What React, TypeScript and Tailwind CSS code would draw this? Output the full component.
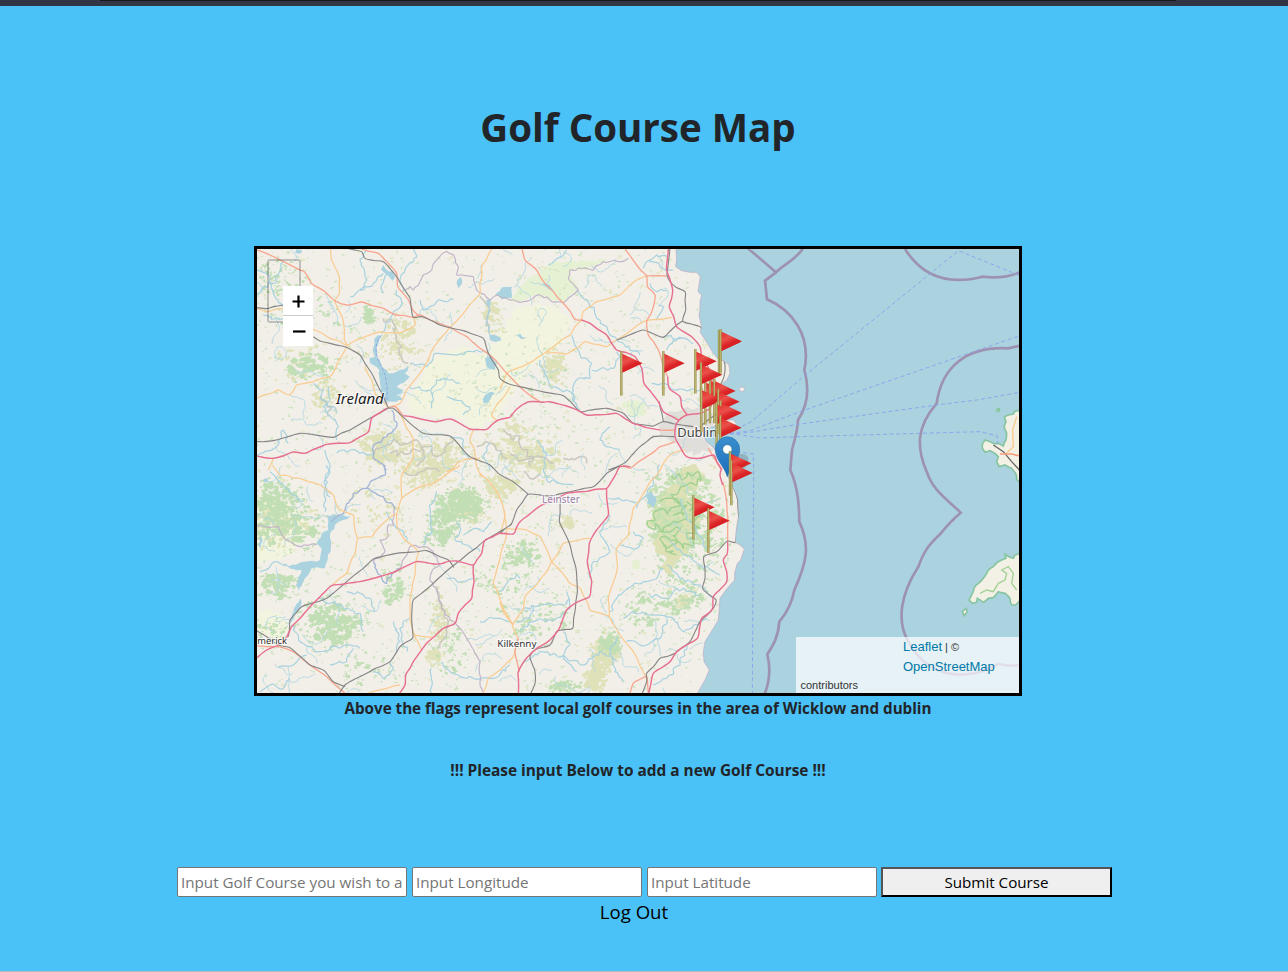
import React from "react";

type Pt = [number, number];

/* The chart is drawn on a grid of three units per pixel, split in six sheets. */
const SHEETS: Pt[] = [
  [0, 0],
  [750, 0],
  [1500, 0],
  [0, 675],
  [750, 675],
  [1500, 675],
];

function makeRandom(seed: number) {
  let s = seed;
  return () => {
    s = (s * 1664525 + 1013904223) % 4294967296;
    return s / 4294967296;
  };
}

function pts(sheet: number, text: string): Pt[] {
  const [ox, oy] = SHEETS[sheet];
  return text.split(" ").map((p) => {
    const [x, y] = p.split(",").map(Number);
    return [x + ox, y + oy] as Pt;
  });
}

function jitter(list: Pt[], amount: number, step: number, rnd: () => number): Pt[] {
  const out: Pt[] = [list[0]];
  for (let i = 1; i < list.length; i++) {
    const [ax, ay] = list[i - 1];
    const [bx, by] = list[i];
    const n = Math.max(1, Math.round(Math.hypot(bx - ax, by - ay) / step));
    for (let k = 1; k <= n; k++) {
      const t = k / n;
      const j = k === n ? 0 : amount;
      out.push([ax + (bx - ax) * t + (rnd() - 0.5) * j, ay + (by - ay) * t + (rnd() - 0.5) * j]);
    }
  }
  return out;
}

function smooth(p: Pt[]): string {
  let d = `M${p[0][0].toFixed(1)},${p[0][1].toFixed(1)}`;
  for (let i = 0; i < p.length - 1; i++) {
    const a = p[i - 1] || p[i];
    const b = p[i];
    const c = p[i + 1];
    const e = p[i + 2] || c;
    d += `C${(b[0] + (c[0] - a[0]) / 7).toFixed(1)},${(b[1] + (c[1] - a[1]) / 7).toFixed(1)} ${(c[0] - (e[0] - b[0]) / 7).toFixed(1)},${(c[1] - (e[1] - b[1]) / 7).toFixed(1)} ${c[0].toFixed(1)},${c[1].toFixed(1)}`;
  }
  return d;
}

const rnd = makeRandom(77);

function lines(source: [number, string][], amount: number, step: number): string {
  return source.map(([s, t]) => smooth(jitter(pts(s, t), amount, step, rnd))).join("");
}

function areas(source: [number, string][], amount: number): string {
  return source
    .map(([s, t]) => {
      const p = pts(s, t);
      return (
        "M" +
        jitter([...p, p[0]], amount, 12, rnd)
          .map(([x, y]) => `${x.toFixed(0)},${y.toFixed(0)}`)
          .join("L") +
        "Z"
      );
    })
    .join("");
}

const COAST: Pt[] = [
  ...pts(1, "528,20 530,60 527,80 545,92 570,97 590,97 601,110 598,130 594,155 605,165 600,185 600,210 597,225 605,262 600,275 622,310 640,340 655,358 670,362 687,375 690,400 680,420 668,430 664,470 668,510 676,540 700,540 710,552 690,562 650,556 622,565 610,582 618,605 640,622 655,645 672,672"),
  ...pts(4, "682,30 700,70 713,100 716,150 708,200 706,232 720,240 733,252 722,285 712,295 704,325 704,345 680,372 660,400 658,430 655,465 640,490 615,530 610,560 612,590 628,615 615,645 595,680 585,700"),
];
const LAND = "M0,0L" + COAST.map((p) => p.join(",")).join("L") + "L0,1400Z";

const WALES = areas(
  [
    [2, "815,512 795,513 790,522 775,525 763,530 768,545 762,560 770,580 768,600 760,618 745,610 735,612 720,605 705,600 697,612 697,625 705,637 720,632 735,640 745,650 740,665 748,680 765,675 785,685 797,700 800,718 815,728"],
    [5, "815,262 795,270 790,280 765,268 768,280 745,290 730,305 715,315 700,340 685,355 672,370 665,390 657,405 668,415 680,412 682,400 700,412 715,400 730,398 745,380 765,385 780,400 785,420 797,420 815,400"],
    [5, "637,440 648,430 652,440 642,452"],
    [2, "741,508 748,506 748,513 741,514"],
  ],
  4,
);
const ISLAND = areas([[1, "716,446 726,440 735,446 728,456 720,452"]], 2);

const MOTORWAYS = lines(
  [
    [0, "21,648 70,655 130,636 165,640 230,613 300,608 355,575 365,535 410,505"],
    [0, "460,527 560,545 600,537 660,567 710,568 745,540 780,532"],
    [1, "30,532 50,508 80,487 150,485 220,505 260,525 350,520 400,550 440,563 480,570"],
    [1, "245,240 270,250 320,285 350,330 405,350 425,385 432,430 475,485 490,515 535,540"],
    [1, "503,410 508,445 540,470 545,500 562,525"],
    [1, "505,20 500,90 518,150 508,200 530,260 575,290 600,320 605,350 635,400 640,450 630,505 600,520 560,525 530,550 525,590 540,620 560,650 600,655 640,645 665,690"],
    [3, "21,578 50,555 85,540 108,520 125,485 190,415 220,385 245,362 330,350 440,318 500,290 550,297 620,288 670,300 695,265 703,228 750,205 790,207 810,170 860,130 950,85 1070,70 1110,5 1140,5"],
    [3, "670,300 672,350 665,400 625,445 615,475 580,490 530,535 490,590 467,630 465,660 445,690"],
    [4, "320,70 325,150 290,195 268,235 262,290 275,350 268,395 230,412 200,435 175,495 150,525 110,550 75,585 55,620 55,690"],
    [4, "665,10 660,30 668,60"],
    [4, "683,230 682,265 670,285 680,320 680,350 640,395 638,430 605,460 592,520 560,540 530,560 510,590 460,625 445,690"],
  ],
  4,
  28,
);

const TRUNKS = lines(
  [
    [0, "21,30 60,45 90,60 150,90 165,97 185,130 225,155 255,183 290,195 335,186 400,205 440,225 490,232 510,225 540,240 600,262 650,290 690,325 720,345 745,370 780,410 820,450 870,485"],
    [0, "335,27 385,40 405,60 440,100 443,140 475,180 490,212 510,230"],
    [0, "410,505 435,500 460,527"],
    [1, "65,20 75,60 110,90 135,130 160,155 190,190 225,238 245,240"],
    [1, "370,20 410,75 440,108 443,140 465,165 460,200 440,245 445,285 475,330 490,380 503,410"],
    [1, "440,108 500,108"],
    [1, "480,570 525,570"],
    [1, "525,605 480,620 440,650 390,685 370,675"],
    [1, "625,625 640,650 665,685"],
    [3, "21,542 85,545 130,560 180,600 230,635 285,685"],
    [4, "668,50 680,110 683,190 683,230"],
    [4, "55,520 45,560 58,620"],
    [4, "390,684 400,655 440,635 445,684"],
  ],
  4,
  28,
);

const PRIMARIES = lines(
  [
    [0, "242,20 245,60 268,110 268,160 255,183 278,235 283,300 290,315 280,340 240,410 140,435 118,465 85,450 21,475"],
    [0, "150,255 190,268 240,295 290,315 340,292 390,276 450,278 495,255 490,232"],
    [0, "730,20 695,80 690,160 640,220 600,262 560,310 520,385 470,450 450,490 425,500"],
    [0, "440,500 460,540 490,600 490,650 455,705 455,775"],
    [0, "345,380 365,420 380,470 415,500"],
    [0, "780,440 740,495 725,525 740,540"],
    [0, "670,570 660,600 672,625 680,680 695,710"],
    [0, "590,695 640,660 690,655"],
    [0, "55,690 68,660 60,655"],
    [0, "21,205 50,215 100,205"],
    [1, "245,240 210,285 160,320 140,335 95,365 20,400 0,450"],
    [1, "140,335 200,342 255,305 320,320 350,300 430,245 515,232"],
    [1, "245,240 250,215 290,185 360,165 410,120 440,108"],
    [1, "555,630 510,645 480,690 440,745 400,805 385,885 350,925 352,985 325,1075 328,1130"],
    [3, "67,0 90,30 150,40 210,60 250,90 265,130 310,150 322,220 315,265 290,325 245,362"],
    [3, "322,220 365,215 405,170 440,145 455,100 500,70 560,50 600,20 630,0"],
    [3, "440,145 443,190 465,225 505,260 495,330 480,400 480,460 495,515 515,555"],
    [3, "495,510 550,517"],
    [3, "690,25 730,65 755,110 765,160 770,200 750,280 730,355 760,430 790,480"],
    [3, "355,684 410,670 450,660"],
    [3, "700,684 715,640 750,615 790,575 805,520"],
    [4, "20,190 80,195 120,215 155,290 210,355 240,370 270,435 328,455 360,510 400,560 440,640"],
    [4, "155,290 190,235 225,228 272,220"],
    [4, "155,290 140,320 75,395 70,430 38,480 55,520"],
    [4, "0,410 10,440 38,480"],
    [4, "0,100 15,150 5,210"],
  ],
  5,
  24,
);

const RAILS = lines(
  [
    [0, "290,25 335,35 345,55 400,65 440,110 480,175 490,232 515,230 570,255 640,272 700,295 715,340 745,390 750,415 780,433 820,442 940,467 990,515 1070,505 1120,520 1150,550 1210,558 1240,545 1330,560"],
    [0, "190,290 210,303 285,320 330,345 365,400 385,440 415,503 430,505 480,550 520,580 600,588 660,650 720,675 745,700 790,725 835,763"],
    [0, "21,605 70,602 150,580 250,592 300,570 360,535 415,505"],
    [0, "21,203 50,206 100,195"],
    [1, "510,20 508,45 502,110 525,140 555,155 557,210 548,243 600,260 625,305 660,345 674,370 672,410 655,450 650,520 600,560"],
    [1, "548,243 530,255 490,292 430,270 350,300"],
    [1, "490,545 480,500 478,485"],
    [1, "325,690 375,668 420,620 460,590 525,590"],
    [3, "115,515 120,465 155,425 230,400 290,350 340,310 375,280 440,265 530,257 570,275 595,285 612,307"],
    [3, "785,178 700,230 612,300 560,345 490,405 485,460 488,520 450,545 420,590 350,625 285,660 265,690"],
    [3, "21,498 50,515 85,540 120,548 180,600 220,615 250,650 285,665"],
    [4, "0,205 35,175 50,135 85,88 150,93 220,78 280,65 320,25 360,2"],
    [4, "182,95 178,170 210,240 228,310 232,380 218,490 170,500 150,540 110,552 90,575 105,620 105,655 90,690"],
    [4, "690,40 712,100 716,160 706,232 683,228 650,260 612,275 615,340 608,370 648,405 640,430 600,470 570,530 525,565 480,580 440,625 440,650 425,690"],
    [1, "612,590 640,620 660,650 690,690"],
  ],
  3,
  30,
);

const LAKES = areas(
  [
    [0, "372,300 385,285 395,290 385,310 380,350 400,385 415,400 440,395 475,378 465,400 480,410 440,440 460,450 440,465 460,480 425,485 400,490 390,430 388,390 360,370 358,355 375,350 368,330"],
    [0, "393,88 400,75 418,95 430,92 436,110 428,122 415,108"],
    [0, "735,165 760,145 785,140 785,175 755,178"],
    [0, "718,285 735,285 755,300 740,305 720,300"],
    [0, "705,355 725,350 742,370 735,390 710,380"],
    [0, "705,465 725,455 735,460 720,480 700,490"],
    [0, "135,38 140,28 155,30 155,38"],
    [0, "622,120 632,110 636,130 625,145"],
    [0, "710,180 722,178 722,195 710,195"],
    [1, "0,150 20,140 32,145 25,165 0,175"],
    [1, "120,136 135,132 148,134 162,152 150,150 140,142"],
    [1, "48,285 62,283 80,293 65,298"],
    [3, "230,150 300,153 255,180 240,210 242,260 225,310 185,310 165,340 145,380 138,360 155,315 115,305 160,290 210,285 215,250 200,235 215,205 235,195"],
    [3, "40,42 52,40 55,52 42,52"],
    [3, "28,215 35,218 33,248 26,245"],
    [3, "150,400 155,410 125,470 112,480 130,440"],
    [4, "445,85 455,78 470,105 460,130 440,115"],
  ],
  8,
);

const RIVERS = lines(
  [
    [0, "440,150 455,190 430,220 395,280"],
    [0, "350,30 330,60 350,120 340,150 300,170"],
    [0, "400,100 370,130 330,150"],
    [0, "410,100 395,135 400,160"],
    [0, "21,90 60,110 70,160 120,230 90,240 40,225"],
    [0, "100,65 70,130 40,140 21,170"],
    [0, "460,155 450,120 470,80 500,50 490,27"],
    [0, "510,180 520,210 560,185 610,180"],
    [0, "235,440 240,480 220,500 265,560 260,600"],
    [0, "190,430 220,450 215,480 250,500 260,520"],
    [0, "480,440 540,450 550,480 545,505"],
    [0, "480,370 530,380 560,340 620,345 670,335 700,330"],
    [0, "545,450 560,420 600,420 630,430"],
    [0, "590,470 640,490 660,510 640,525"],
    [0, "715,190 710,240 720,285"],
    [0, "21,650 80,620 100,570 115,610"],
    [0, "225,630 240,680 225,740 240,770"],
    [0, "260,640 300,630 330,640 370,640"],
    [0, "600,590 640,600 640,640 660,660"],
    [0, "720,610 700,650 720,690"],
    [1, "145,75 165,60 185,50 200,30"],
    [1, "230,150 260,180 300,240 340,290 390,330 420,345"],
    [1, "215,285 240,345 275,370 270,415 230,420 215,460 230,500"],
    [1, "120,360 135,400 150,440 210,455 240,510"],
    [1, "275,390 340,385 360,350 350,335"],
    [1, "445,60 480,80 520,90"],
    [1, "500,50 470,45 440,65 430,85"],
    [1, "500,150 470,155 450,130"],
    [1, "490,290 540,295 580,310"],
    [1, "470,240 490,200 475,195"],
    [1, "500,330 520,300 560,295"],
    [1, "455,430 490,430 530,450 600,450"],
    [1, "110,600 140,640 130,690 140,720 220,735"],
    [1, "330,560 300,600 320,620 360,630"],
    [3, "60,20 130,90 160,110"],
    [3, "230,0 240,20 222,50 225,140"],
    [3, "480,235 460,200 430,175 410,140"],
    [3, "30,320 80,290 130,310"],
    [3, "290,380 330,385 365,410 370,440"],
    [3, "205,400 260,420 330,445 340,500"],
    [3, "85,605 130,600 170,570"],
    [3, "125,480 150,530 210,560 290,540 330,550"],
    [3, "240,600 290,590 310,550"],
    [3, "430,470 450,530 440,560"],
    [3, "470,560 450,490 480,460"],
    [3, "370,620 400,640 430,610 420,590"],
    [3, "545,610 545,684"],
    [3, "575,590 600,620 650,640 730,640 780,600"],
    [3, "560,80 540,130 545,200 520,240"],
    [3, "590,340 640,350 670,340"],
    [3, "620,170 630,200 615,220 650,240 690,260"],
    [3, "690,470 730,460 780,470"],
    [3, "725,170 700,200 680,190 640,210"],
    [3, "120,640 100,670 60,660 30,680"],
    [4, "480,0 460,50 430,100 410,130"],
    [4, "325,100 380,105 410,110"],
    [4, "330,150 300,200 330,260 280,290 270,340"],
    [4, "510,230 560,270 600,300 660,330"],
    [4, "500,300 540,340 600,360 640,400"],
    [4, "330,440 350,400 400,360 440,350 470,340 490,310"],
    [4, "370,460 400,440 460,450 520,460 550,500 620,460"],
    [4, "500,460 480,520 440,540 380,530"],
    [4, "200,380 210,430 170,460 100,470 60,500"],
    [4, "75,590 120,560 200,580 250,600 300,560 350,590"],
    [4, "190,500 210,540 190,580 230,620"],
    [4, "350,520 330,560 345,620 370,650"],
    [4, "70,430 120,420 190,420 210,400"],
    [4, "0,380 50,330 60,340"],
    [4, "560,540 540,600 500,640 460,660"],
    [4, "450,390 500,400 530,370 600,390"],
    [4, "620,250 590,200 560,150 540,100"],
    [4, "400,200 430,220 410,250 360,240"],
    [4, "100,420 90,460 50,470"],
  ],
  11,
  11,
);

const SHANNON = lines(
  [
    [0, "425,510 440,560 410,590 370,620 370,650 410,690"],
    [3, "405,0 405,30 370,45 350,70 310,85 280,145 245,170"],
    [3, "350,70 400,95 435,130"],
    [3, "370,290 395,340 410,355 425,325 450,310"],
  ],
  8,
  10,
);

const COUNTIES = lines(
  [
    [0, "465,150 480,140 490,150 510,125 520,105 545,90 560,60 590,35 610,45 625,80 620,105 670,110 680,150 720,180 740,165 780,180 820,185 870,165 900,180 940,188 985,150 955,115 960,90 1000,85 1030,90 1060,65 1105,65 1135,55"],
    [3, "21,183 85,185 100,215 140,242 200,240"],
    [3, "435,130 430,180 415,180 410,220 390,225 405,260 370,290"],
    [3, "450,310 480,245 520,245 550,260 570,300 545,320 540,345 560,370 575,430 620,480 650,520 690,590 690,650 700,684"],
  ],
  8,
  12,
);

const generated = (() => {
  const r = makeRandom(4123);
  let d = "";
  for (let i = 0; i < 140; i++) {
    let x = 30 + r() * 1330;
    let y = 30 + r() * 1330;
    let a = r() * 6.28;
    const list: Pt[] = [[x, y]];
    const n = 5 + Math.floor(r() * 10);
    for (let k = 0; k < n; k++) {
      a += (r() - 0.5) * 1.7;
      x += Math.cos(a) * 9;
      y += Math.sin(a) * 9;
      list.push([x, y]);
    }
    d += smooth(list);
  }
  return d;
})();

function blob(x: number, y: number, radius: number, r: () => number) {
  const n = 7;
  const out: string[] = [];
  for (let i = 0; i < n; i++) {
    const a = (i / n) * 6.283;
    const m = radius * (0.45 + r() * 0.8);
    out.push(`${(x + Math.cos(a) * m).toFixed(0)},${(y + Math.sin(a) * m * 0.8).toFixed(0)}`);
  }
  return "M" + out.join("L") + "Z";
}

/* Every group is centre x, centre y, radius x, radius y, count, size. */
function scatter(groups: number[][], seed: number): string {
  const r = makeRandom(seed);
  let d = "";
  groups.forEach(([cx, cy, rx, ry, count, size]) => {
    for (let i = 0; i < count; i++) {
      const a = r() * 6.283;
      const m = Math.pow(r(), 0.6);
      const x = cx + Math.cos(a) * rx * m;
      const y = cy + Math.sin(a) * ry * m;
      const parts = 1 + Math.floor(r() * 3);
      for (let k = 0; k < parts; k++) {
        d += blob(x + (r() - 0.5) * size * 1.8, y + (r() - 0.5) * size * 1.4, size * (0.35 + r() * 0.5), r);
      }
    }
  });
  return d;
}

/* Small patches thrown wide of each group break up its outline. */
function fringe(groups: number[][]): number[][] {
  return groups.map(([cx, cy, rx, ry, count, size]) => [cx, cy, rx * 1.5, ry * 1.45, count * 1.3, size * 0.5]);
}

const SPECKS = scatter([[690, 690, 950, 950, 2200, 5]], 9);
const SPECKS_OCHRE = scatter([[690, 690, 950, 950, 450, 8]], 19);

const WOOD_GROUPS = [
  [75, 785, 75, 55, 75, 13],
  [110, 865, 90, 50, 52, 13],
  [85, 1040, 45, 32, 34, 13],
  [250, 1150, 75, 60, 80, 13],
  [635, 795, 55, 42, 75, 14],
  [585, 835, 40, 50, 40, 13],
  [560, 890, 30, 25, 20, 12],
  [435, 1045, 30, 50, 22, 12],
  [180, 380, 60, 35, 30, 13],
  [356, 228, 12, 25, 24, 9],
  [90, 110, 70, 60, 40, 8],
  [150, 230, 120, 60, 30, 8],
  [820, 955, 50, 50, 32, 12],
  [1080, 1210, 26, 30, 26, 13],
  [870, 1140, 80, 60, 28, 10],
  [1310, 960, 90, 90, 60, 9],
  [1340, 850, 90, 110, 70, 9],
  [1190, 1110, 60, 60, 30, 10],
  [1300, 1080, 60, 40, 28, 10],
  [1280, 730, 70, 50, 40, 9],
  [600, 1230, 50, 90, 30, 8],
  [60, 1180, 50, 40, 26, 8],
  [850, 450, 120, 140, 30, 7],
  [370, 1280, 90, 60, 22, 8],
  [950, 1345, 45, 16, 18, 11],
  [760, 1040, 90, 80, 30, 8],
];
const WOODS = scatter(WOOD_GROUPS, 31) + scatter(fringe(WOOD_GROUPS), 35);

const OCHRE_GROUPS = [
  [450, 300, 45, 60, 34, 12],
  [230, 470, 40, 55, 18, 12],
  [400, 620, 60, 45, 48, 14],
  [560, 650, 90, 40, 38, 13],
  [520, 700, 70, 35, 36, 13],
  [730, 240, 25, 50, 14, 12],
  [915, 380, 26, 42, 34, 12],
  [790, 610, 60, 60, 28, 14],
  [860, 660, 70, 45, 32, 14],
  [760, 740, 40, 35, 22, 15],
  [100, 860, 100, 55, 34, 14],
  [640, 800, 60, 45, 28, 13],
  [570, 1140, 22, 70, 28, 11],
  [555, 1250, 18, 22, 14, 12],
  [1065, 1240, 32, 42, 46, 16],
  [1035, 1310, 20, 38, 34, 16],
  [950, 850, 22, 14, 16, 12],
  [310, 320, 250, 30, 10, 9],
  [1300, 1085, 20, 16, 12, 12],
  [370, 800, 90, 50, 18, 9],
  [120, 380, 60, 50, 12, 9],
];
const OCHRES = scatter(OCHRE_GROUPS, 57) + scatter(fringe(OCHRE_GROUPS), 61);

const BOGS = lines(
  [
    [0, "400,235 430,250 440,290 455,320 450,345 475,370"],
    [0, "690,170 720,210 715,270"],
    [0, "370,640 400,620 430,600 460,610 500,600 520,640 500,680"],
    [0, "680,620 720,610 740,630 770,660"],
    [0, "420,640 480,640 530,620 560,650 610,600"],
    [0, "210,470 240,500 235,530"],
    [1, "10,570 40,600 60,590 70,630 100,650 90,680"],
    [1, "30,640 70,660 120,650 160,670"],
    [1, "190,655 240,650 260,670"],
    [3, "460,20 500,30 530,10 570,20"],
    [3, "560,370 575,430 590,490 570,550"],
    [4, "70,20 90,40 120,30"],
  ],
  18,
  12,
);

const WICKLOW = areas(
  [
    [4, "485,95 515,60 520,25 560,5 595,10 610,50 585,80 560,95 600,130 600,180 570,200 585,225 560,270 535,285 515,330 490,310 490,270 455,235 475,205 440,180 455,135 490,130"],
  ],
  24,
);
const WICKLOW_WOODS = scatter(
  [
    [1310, 810, 95, 120, 90, 11],
    [1230, 780, 40, 40, 24, 11],
    [1240, 860, 40, 60, 30, 11],
  ],
  88,
);
const WICKLOW_EDGE = lines(
  [
    [4, "515,30 560,35 595,20 590,60 545,65 515,90 540,120 500,140 460,150 445,185 490,190 520,170 560,165"],
    [4, "560,110 600,150 570,170 600,190 560,210 580,240 550,250 520,225 480,220 500,260 530,270"],
    [4, "480,110 520,100 560,120 550,150 520,150"],
    [4, "470,200 510,200 540,190 520,240 490,240"],
  ],
  24,
  12,
);

const FLAGS: Pt[] = [
  [364, 333], [490, 333], [586, 327], [657, 270], [662, 267], [616, 420], [630, 416], [643, 416],
  [603, 367], [604, 443], [655, 448], [662, 482], [650, 486], [661, 526],
];
const LOWER_FLAGS: Pt[] = [[690, 633], [694, 662], [580, 765], [625, 805]];

function Flag({ at }: { at: Pt }) {
  return (
    <g transform={`translate(${at[0] + 750} ${at[1]})`}>
      <rect x="-3.5" y="0" width="7" height="134" fill="url(#pole)" />
      <path d="M3,8 L64,37 L3,65 Z" fill="url(#cloth)" />
    </g>
  );
}

function MapLabel({ x, y, size, fill, italic, children }: { x: number; y: number; size: number; fill: string; italic?: boolean; children: string }) {
  return (
    <text
      x={x}
      y={y}
      fontSize={size}
      fill={fill}
      fontStyle={italic ? "italic" : "normal"}
      stroke="#ffffff"
      strokeOpacity="0.7"
      strokeWidth="7"
      strokeLinejoin="round"
      paintOrder="stroke"
      fontFamily="'Noto Sans', sans-serif"
    >
      {children}
    </text>
  );
}

function Chart() {
  return (
    <svg className="block h-[444px] w-[762px]" viewBox="21 27 2286 1332">
      <defs>
        <clipPath id="land">
          <path d={LAND} />
        </clipPath>
        <linearGradient id="pole">
          <stop offset="0" stopColor="#8c8440" />
          <stop offset="0.5" stopColor="#c2b972" />
          <stop offset="1" stopColor="#948b45" />
        </linearGradient>
        <linearGradient id="cloth" x1="0" y1="0" x2="0.5" y2="1">
          <stop offset="0" stopColor="#e0302d" />
          <stop offset="0.4" stopColor="#ea5049" />
          <stop offset="0.65" stopColor="#dc2427" />
          <stop offset="1" stopColor="#cf1b20" />
        </linearGradient>
        <linearGradient id="pin" x1="0" y1="0" x2="0" y2="1">
          <stop offset="0" stopColor="#3a8fce" />
          <stop offset="1" stopColor="#1b6db8" />
        </linearGradient>
      </defs>
      <rect x="0" y="0" width="2400" height="1400" fill="#aad3df" />
      <path d={LAND} fill="#f2efe9" stroke="#bba9c6" strokeWidth="2" />
      <g clipPath="url(#land)" fill="none">
        <path d={areas([[0, "470,470 510,420 530,370 580,340 640,320 700,340 740,300 800,200 900,195 970,250 920,330 850,370 800,440 740,530 680,560 590,530 480,520"], [3, "21,90 120,120 190,190 120,270 21,290"], [3, "21,440 60,430 110,480 100,530 21,500"]], 18)} fill="#f3f4df" />
        <path d={areas([[1, "30,180 80,120 120,90 160,70 240,60 330,60 310,70 250,88 208,95 235,150 190,188 150,178 110,165 70,185"], [1, "365,490 400,480 440,490 430,530 390,530"], [4, "392,290 430,285 420,310 395,310"]], 14)} fill="#e6f0d3" />
        <path d={areas([[1, "500,520 560,500 640,520 640,560 605,580 640,630 600,640 560,640 530,610 480,590 485,550"]], 18)} fill="#e0deda" />
        <path d={SPECKS_OCHRE} fill="#e4e6c6" />
        <path d={SPECKS} fill="#cfe4c2" />
        <path d={OCHRES} fill="#dfe1b9" />
        <path d={WOODS} fill="#c1deb4" />
        <path d={BOGS} stroke="#cbcabf" strokeWidth="5" />
        <path d={WICKLOW} fill="#dde1b5" />
        <path d={WICKLOW_WOODS} fill="#c6e0b3" />
        <path d={WICKLOW_EDGE} stroke="#a3d193" strokeWidth="4.5" />
        <path d={generated} stroke="#b4d8e2" strokeWidth="2.8" />
        <path d={RIVERS} stroke="#a8d2df" strokeWidth="3.6" />
        <path d={LAKES} fill="#aad3df" />
        <path d={SHANNON} stroke="#a3b5d6" strokeWidth="4" />
        <path d={COUNTIES} stroke="#c2b5c8" strokeWidth="3.5" />
        <path d="M395,285C370,310 375,350 395,380C415,420 412,460 410,495" stroke="#94a9e4" strokeWidth="3" strokeDasharray="10 5" />
        <path d={PRIMARIES} stroke="#f9cc92" strokeWidth="3.8" />
        <path d={TRUNKS} stroke="#f8a58f" strokeWidth="4" />
        <path d={RAILS} stroke="#868686" strokeWidth="3.4" />
        <path d={MOTORWAYS} stroke="#e76f8f" strokeWidth="4.3" />
      </g>
      <path d={ISLAND} fill="#f2efe9" stroke="#bba9c6" strokeWidth="2" />
      <path d={WALES} fill="#f3f0e6" stroke="#86c5a0" strokeWidth="5" />
      <path d="M2190,1060L2210,1050L2230,1055L2245,1030L2265,1020L2270,1000L2255,990L2275,980L2290,1000L2285,1030L2300,1050" fill="none" stroke="#a3d193" strokeWidth="4" />
      <path d="M2230,615L2260,635L2285,665L2310,692" fill="none" stroke="#666666" strokeWidth="4" />
      <path d="M2250,642L2285,642L2310,648" fill="none" stroke="#f79a7c" strokeWidth="5" />
      <path d="M2300,530L2288,570L2290,620L2270,640" fill="none" stroke="#f9c98c" strokeWidth="4" />
      <g fill="none" stroke="#9d92b0" strokeWidth="8">
        <path d="M1490,20L1500,30L1578,97C1605,70 1630,65 1658,27" />
        <path d="M1578,97L1545,122L1551,178C1625,210 1685,285 1663,390C1677,440 1678,490 1644,540C1642,580 1631,608 1626,630L1621,690C1645,745 1647,795 1648,845C1680,915 1672,965 1633,1050C1625,1095 1605,1125 1588,1145C1585,1190 1570,1215 1552,1243C1565,1295 1555,1335 1543,1365" />
        <path d="M1965,27C2020,115 2100,135 2197,110Q2260,118 2310,97" />
        <path d="M2310,317L2275,325C2150,318 2075,380 2060,490C2000,560 1998,620 2030,695C2050,755 2095,780 2132,818Q2100,845 2070,883C2030,920 2020,940 2005,980C1950,1065 1940,1145 1975,1205C2040,1325 2160,1320 2245,1272Q2280,1280 2310,1275" />
      </g>
      <g fill="none" stroke="#8ea6ec" strokeWidth="3" strokeDasharray="12 8">
        <path d="M1440,575L1500,548L1660,410L2125,32L2310,107" />
        <path d="M1440,580L1500,572L1650,515L2310,287" />
        <path d="M1440,582L1500,577L1645,553L2060,495L2180,480L2310,457" />
        <path d="M1440,580L1530,594L1650,590L2190,575L2242,588V612" />
        <path d="M1460,635L1510,642L1511,690L1507,1360" />
      </g>
      <MapLabel x={258} y={492} size={45} fill="#1c1c1c" italic>Ireland</MapLabel>
      <MapLabel x={1282} y={592} size={38.5} fill="#444444">Dublin</MapLabel>
      <MapLabel x={876} y={788} size={30} fill="#9a7fa8">Leinster</MapLabel>
      <MapLabel x={742} y={1222} size={29.5} fill="#333333">Kilkenny</MapLabel>
      <MapLabel x={22} y={1211} size={28} fill="#333333">merick</MapLabel>
      {FLAGS.map((f, i) => (
        <Flag key={i} at={f} />
      ))}
      <ellipse cx="1462" cy="672" rx="38" ry="24" fill="#4b5f6b" opacity="0.28" transform="rotate(-38 1462 672)" />
      <path d="M1432,710C1424,680 1396,660 1396,628A36,37 0 0 1 1469,628C1469,660 1441,680 1432,710Z" fill="url(#pin)" stroke="#2b74b0" strokeWidth="2" />
      <circle cx="1432" cy="628" r="14" fill="#ffffff" stroke="#2e6c97" strokeWidth="2" />
      {LOWER_FLAGS.map((f, i) => (
        <Flag key={i} at={f} />
      ))}
    </svg>
  );
}

const field =
  "h-[30px] w-[230px] rounded-[2px] border border-[#767676] bg-white pl-[3px] pr-[3px] text-[15.2px] text-black outline-none placeholder:text-[#757575] placeholder:opacity-100";

export default function App() {
  return (
    <div className="flex h-[972px] w-[1288px] flex-col overflow-hidden border-b border-[#b4bcc2] bg-[#4ac1f7] font-['Open_Sans','Noto_Sans',sans-serif] text-[#212529]">
      <div className="h-[6px] shrink-0 bg-[#323544]">
        <div className="ml-[100px] h-px w-[1076px] bg-[#17181f]" />
      </div>
      <main className="flex w-[1276px] flex-col items-center">
        <h1 className="mt-[97px] h-[48px] whitespace-nowrap text-[38.5px] font-bold leading-[48px]">Golf Course Map</h1>
        <section className="relative mt-[95px] h-[450px] w-[768px] overflow-hidden border-[3px] border-black">
          <Chart />
          <div className="absolute left-[10px] top-[10px] h-[64px] w-[34px] rounded-[3px] border-2 border-black/20" />
          <div className="absolute left-[26px] top-[37px] flex w-[30px] flex-col bg-white text-black">
            <button aria-label="Zoom in" className="flex h-[30px] items-center justify-center border-b border-[#cccccc] pt-px">
              <svg className="h-[13px] w-[13px]" viewBox="0 0 13 13">
                <path d="M0.5,6.5H12.5M6.5,0.5V12.5" stroke="#000" strokeWidth="2.2" />
              </svg>
            </button>
            <button aria-label="Zoom out" className="flex h-[30px] items-center justify-center pl-[2px]">
              <svg className="h-[13px] w-[13px]" viewBox="0 0 13 13">
                <path d="M0,6.5H12.5" stroke="#000" strokeWidth="2.2" />
              </svg>
            </button>
          </div>
          <div className="absolute bottom-0 right-0 h-[56px] w-[223px] bg-white/70 font-['Liberation_Sans',Arial,sans-serif] text-[11px] leading-[20px] text-[#333333]">
            <div className="h-[20px] pl-[107px]">
              <a className="text-[13px] leading-[18px] text-[#0078a8]">Leaflet</a> | ©
            </div>
            <div className="h-[20px] pl-[107px]">
              <a className="text-[13px] leading-[18px] text-[#0078a8]">OpenStreetMap</a>
            </div>
            <div className="pl-[4.5px] leading-[16px]">contributors</div>
          </div>
        </section>
        <p className="mt-0 whitespace-nowrap text-[15.2px] font-bold leading-[24px]">Above the flags represent local golf courses in the area of Wicklow and dublin</p>
        <p className="mt-[39px] whitespace-nowrap text-[15.4px] font-bold leading-[24px]">!!! Please input Below to add a new Golf Course !!!</p>
        <form className="ml-[13px] mt-[84px] flex gap-[5px]" onSubmit={(e) => e.preventDefault()}>
          <input className={field} placeholder="Input Golf Course you wish to add" />
          <input className={field} placeholder="Input Longitude" />
          <input className={field} placeholder="Input Latitude" />
          <button className="-ml-px h-[30px] w-[231px] border-2 border-b-black border-l-[#555555] border-r-black border-t-[#555555] bg-[#efefef] text-[15.2px] leading-[26px] text-black">Submit Course</button>
        </form>
        <a className="mr-[8px] mt-px text-[18.6px] leading-[27px] text-black">Log Out</a>
      </main>
    </div>
  );
}
